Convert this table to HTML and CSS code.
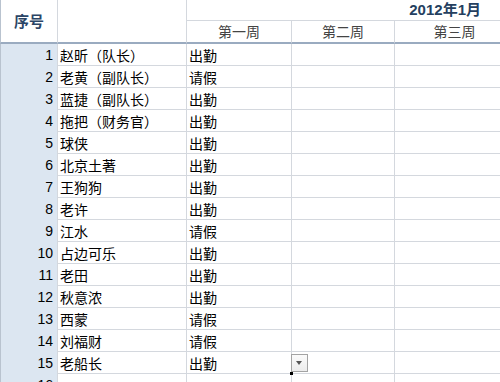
FILE: index.html
```html
<!DOCTYPE html>
<html lang="zh-CN">
<head>
<meta charset="utf-8">
<title>考勤表</title>
<link rel="stylesheet" href="styles.css">
</head>
<body>
<div class="sheet">
  <div class="cell no hd hd-no">序号</div>
  <div class="cell hd hd-blank"></div>
  <div class="cell title">2012年1月</div>
  <div class="cell wk">第一周</div>
  <div class="cell wk">第二周</div>
  <div class="cell wk">第三周</div>

  <div class="cell no">1</div><div class="cell name">赵昕（队长）</div><div class="cell st">出勤</div><div class="cell"></div><div class="cell"></div>
  <div class="cell no">2</div><div class="cell name">老黄（副队长）</div><div class="cell st">请假</div><div class="cell"></div><div class="cell"></div>
  <div class="cell no">3</div><div class="cell name">蓝捷（副队长）</div><div class="cell st">出勤</div><div class="cell"></div><div class="cell"></div>
  <div class="cell no">4</div><div class="cell name">拖把（财务官）</div><div class="cell st">出勤</div><div class="cell"></div><div class="cell"></div>
  <div class="cell no">5</div><div class="cell name">球侠</div><div class="cell st">出勤</div><div class="cell"></div><div class="cell"></div>
  <div class="cell no">6</div><div class="cell name">北京土著</div><div class="cell st">出勤</div><div class="cell"></div><div class="cell"></div>
  <div class="cell no">7</div><div class="cell name">王狗狗</div><div class="cell st">出勤</div><div class="cell"></div><div class="cell"></div>
  <div class="cell no">8</div><div class="cell name">老许</div><div class="cell st">出勤</div><div class="cell"></div><div class="cell"></div>
  <div class="cell no">9</div><div class="cell name">江水</div><div class="cell st">请假</div><div class="cell"></div><div class="cell"></div>
  <div class="cell no">10</div><div class="cell name">占边可乐</div><div class="cell st">出勤</div><div class="cell"></div><div class="cell"></div>
  <div class="cell no">11</div><div class="cell name">老田</div><div class="cell st">出勤</div><div class="cell"></div><div class="cell"></div>
  <div class="cell no">12</div><div class="cell name">秋意浓</div><div class="cell st">出勤</div><div class="cell"></div><div class="cell"></div>
  <div class="cell no">13</div><div class="cell name">西蒙</div><div class="cell st">请假</div><div class="cell"></div><div class="cell"></div>
  <div class="cell no">14</div><div class="cell name">刘福财</div><div class="cell st">请假</div><div class="cell"></div><div class="cell"></div>
  <div class="cell no">15</div><div class="cell name">老船长</div><div class="cell st selected">出勤<span class="dropdown"><span class="arrow"></span></span><span class="handle"></span></div><div class="cell"></div><div class="cell"></div>
  <div class="cell no">16</div><div class="cell name"></div><div class="cell st"></div><div class="cell"></div><div class="cell"></div>
</div>
</body>
</html>
```

FILE: styles.css
```css
html, body {
  margin: 0;
  padding: 0;
  background: #ffffff;
  overflow: hidden;
}

.sheet {
  display: grid;
  grid-template-columns: 58px 129px 105px 103px 120px;
  grid-template-rows: 21px 23px repeat(16, 22px);
  width: 515px;
  font-family: "Noto Sans CJK SC", "Liberation Sans", sans-serif;
  font-size: 14px;
  color: #000000;
}

.cell {
  box-sizing: border-box;
  border-right: 1px solid #d4d8de;
  border-bottom: 1px solid #d4d8de;
  line-height: 21px;
  white-space: nowrap;
  overflow: visible;
  position: relative;
}

.no {
  background: #dce6f1;
  border-left: 1px solid #b9c3cf;
  border-bottom: none;
  text-align: right;
  padding-right: 4px;
  font-family: "Liberation Sans", sans-serif;
  font-size: 14px;
  padding-top: 1px;
}

.name {
  padding-left: 2px;
  padding-top: 1px;
}

.st {
  padding-left: 2px;
  padding-top: 1px;
}

.hd {
  grid-row: span 2;
  background: #ffffff;
  border-bottom: 2px solid #9aabc0;
}

.hd-no {
  text-align: center;
  padding: 0;
  line-height: 42px;
  font-family: "Noto Sans CJK SC", sans-serif;
  font-weight: bold;
  font-size: 15px;
  color: #2b4566;
}

.title {
  grid-column: span 3;
  text-align: right;
  padding-right: 33px;
  font-family: "Liberation Sans", "Noto Sans CJK SC", sans-serif;
  font-weight: bold;
  font-size: 15px;
  line-height: 20px;
  color: #243f60;
}

.wk {
  border-bottom: 2px solid #9aabc0;
  text-align: center;
  color: #444444;
  line-height: 21px;
}

.dropdown {
  position: absolute;
  left: 104px;
  top: 2px;
  width: 17px;
  height: 18px;
  box-sizing: border-box;
  border: 1px solid #a3a3a3;
  background: linear-gradient(#fbfbfb, #ececec);
  z-index: 2;
}

.arrow {
  position: absolute;
  left: 4px;
  top: 6px;
  width: 0;
  height: 0;
  border-left: 3.5px solid transparent;
  border-right: 3.5px solid transparent;
  border-top: 4px solid #555555;
}

.handle {
  position: absolute;
  left: 103px;
  bottom: -2px;
  width: 3px;
  height: 3px;
  background: #000000;
  z-index: 3;
}
```
